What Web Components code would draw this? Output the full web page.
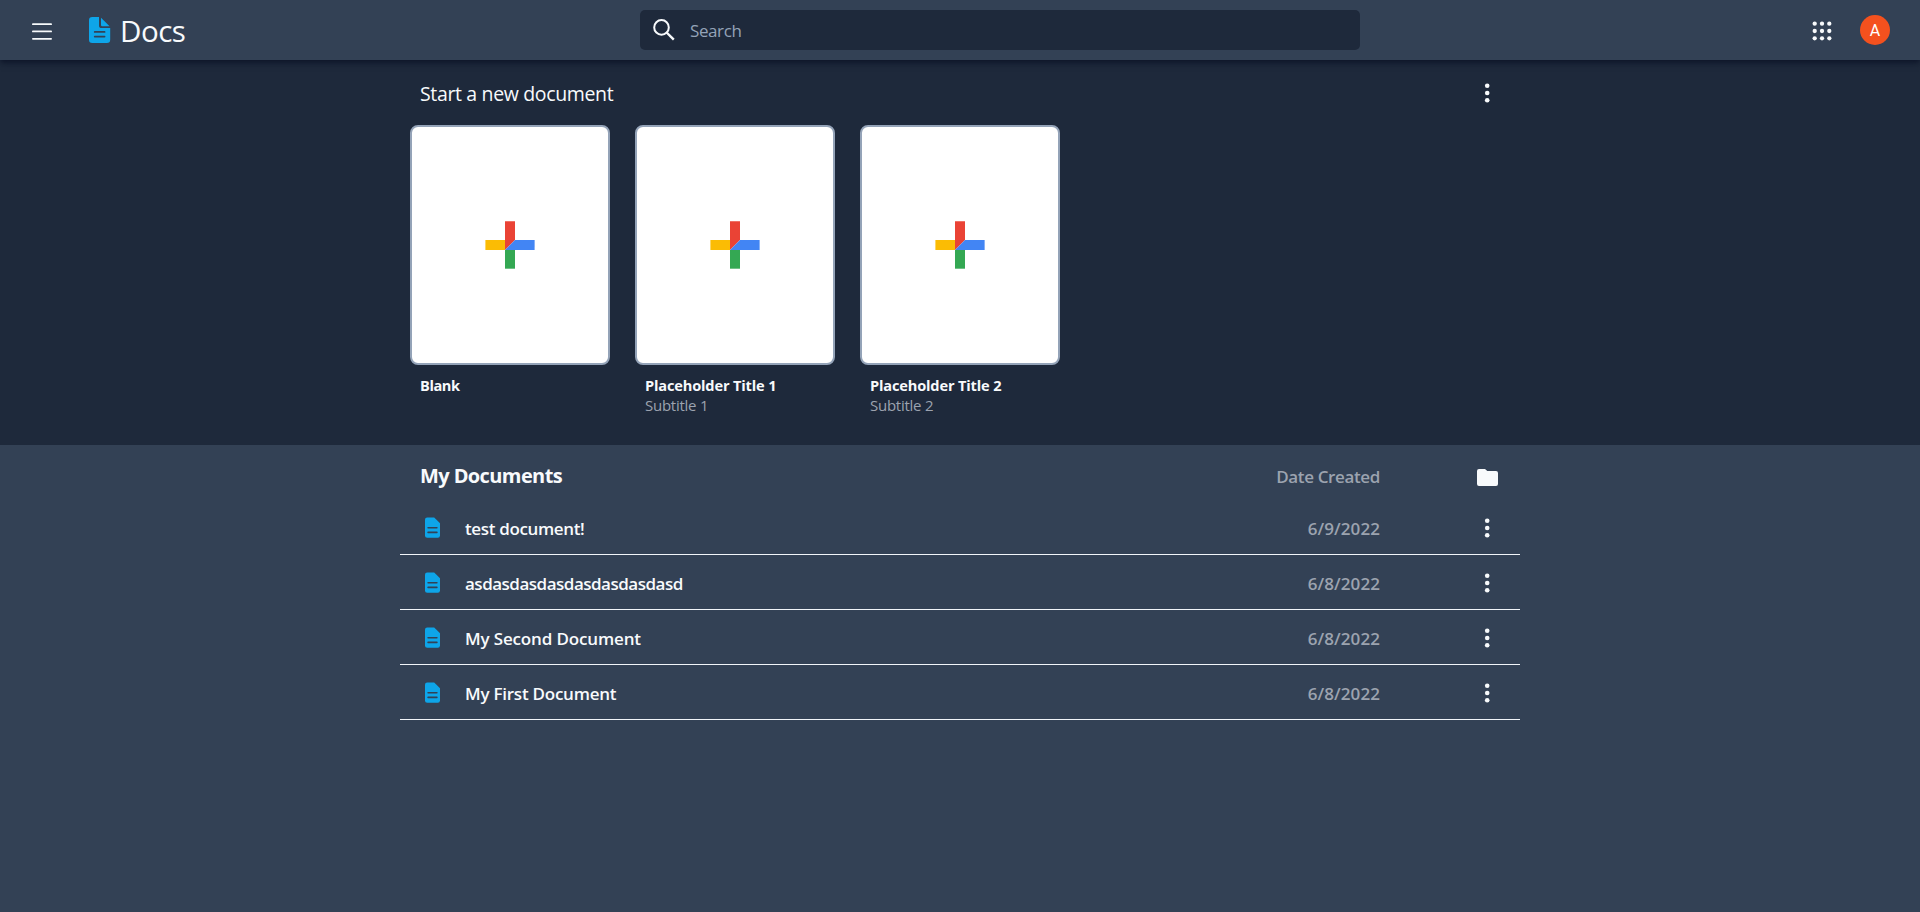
<!DOCTYPE html>
<html lang="en">
<head>
<meta charset="utf-8">
<title>Docs</title>
<style>
html,body{margin:0;height:100%;background:#334155}
body{font-family:"Open Sans","Noto Sans",sans-serif;color:#f8fafc;overflow:hidden}
</style>
</head>
<body>
<docs-app></docs-app>
<script>
function define(name, html, setup) {
  const template = document.createElement('template');
  template.innerHTML = html;
  customElements.define(name, class extends HTMLElement {
    connectedCallback() {
      if (this.shadowRoot) return;
      this.attachShadow({ mode: 'open' }).append(template.content.cloneNode(true));
      if (setup) setup(this, this.shadowRoot);
    }
  });
}

const icons = {
  menu: [20, 18, '<path d="M.9 2.2H19.1M.9 9.4H19.1M.9 16.8H19.1" stroke="#f8fafc" stroke-width="1.8" stroke-linecap="round"/>'],
  logo: [22, 26, '<path d="M3.3 0H10V8.4Q10 11 12.6 11H21.2V22.7Q21.2 26 17.9 26H3.3Q0 26 0 22.7V3.3Q0 0 3.3 0Z" fill="#0ea5e9"/><path d="M12 .8L20.6 9.3H13.2Q12 9.3 12 8.1Z" fill="#0ea5e9"/><path d="M5.7 14.9H15.6M5.7 19.6H15.6" stroke="#334155" stroke-width="1.7" stroke-linecap="round"/>'],
  file: [15, 21, '<path d="M2.2 .4H9.2L15 6.2V18.6Q15 20.8 12.8 20.8H2.2Q0 20.8 0 18.6V2.6Q0 .4 2.2 .4Z" fill="#0ea5e9"/><path d="M3.1 10.7H11.9M3.1 15.4H11.9" stroke="#334155" stroke-width="1.6" stroke-linecap="round"/>'],
  search: [22, 22, '<circle cx="8.5" cy="8.4" r="7.3" fill="none" stroke="#f8fafc" stroke-width="2"/><path d="M13.6 13.5L20.8 20.7" stroke="#f8fafc" stroke-width="2.4"/>'],
  apps: [20, 20, [2.7, 10, 17.3].map(y => [2.7, 10, 17.3].map(x => `<circle cx="${x}" cy="${y}" r="2.15" fill="#f8fafc"/>`).join('')).join('')],
  more: [6, 20, [2.8, 10, 17.2].map(y => `<circle cx="3.2" cy="${y}" r="2.3" fill="#f8fafc"/>`).join('')],
  folder: [21, 17, '<path d="M2 0H8L10.3 2.1H19Q21 2.1 21 4.1V15Q21 17 19 17H2Q0 17 0 15V2Q0 0 2 0Z" fill="#f8fafc"/>'],
  plus: [50, 48, '<path d="M20 .3H30V19L20 29Z" fill="#ea4335"/><path d="M.4 19H20V29H.4Z" fill="#fbbc04"/><path d="M20 29H30V47.7H20Z" fill="#34a853"/><path d="M30 19H49.6V29H20Z" fill="#4285f4"/>']
};

define('docs-icon', '<style>:host{display:block;flex:none}svg{display:block}</style>', (el, root) => {
  const [w, h, body] = icons[el.getAttribute('name')];
  root.innerHTML += `<svg width="${w}" height="${h}" viewBox="0 0 ${w} ${h}" fill="none">${body}</svg>`;
});

define('docs-avatar', `<style>
:host{display:grid;place-items:center;box-sizing:border-box;width:30px;height:30px;border-radius:50%;background:#f4511e;color:#fff;font:400 16px/30px Roboto,sans-serif}
slot{display:block;padding-top:1px}
</style><slot></slot>`);

define('docs-search', `<style>
:host{display:flex;align-items:center;box-sizing:border-box;width:720px;height:40px;padding:0 13px;gap:15px;border-radius:5px;background:#1e293b;color:#94a3b8;font-size:17px;line-height:24px;letter-spacing:-.4px}
span{padding-top:2px}
</style><docs-icon name="search"></docs-icon><span><slot></slot></span>`);

define('docs-header', `<style>
:host{display:grid;grid-template-columns:608px 720px 1fr;align-items:center;box-sizing:border-box;height:60px;padding:0 30px 0 32px;background:#334155;box-shadow:0 4px 6px -1px #0f172acc,0 2px 4px -1px #0f172a;position:relative;z-index:1}
.brand{display:flex;align-items:center}
.brand docs-icon[name=menu]{margin-right:37px;padding-top:1px}
.name{font-size:29.5px;line-height:40px;letter-spacing:-.5px;margin-left:9px;padding-top:1px}
.tools{display:flex;align-items:center;justify-content:flex-end;gap:28px}
.tools docs-icon{padding-top:1px}
</style>
<div class="brand"><docs-icon name="menu"></docs-icon><docs-icon name="logo"></docs-icon><span class="name">Docs</span></div>
<docs-search>Search</docs-search>
<div class="tools"><docs-icon name="apps"></docs-icon><docs-avatar>A</docs-avatar></div>`);

define('template-card', `<style>
:host{display:block;width:200px}
.page{display:grid;place-items:center;box-sizing:border-box;height:240px;border:2px solid #94a3b8;border-radius:8px;background:#fff}
.text{padding:10px 0 0 10px;line-height:20px;white-space:nowrap}
.title{font-weight:700;font-size:14.6px;letter-spacing:var(--title-tracking,-.16px)}
.sub{font-size:15px;color:#9ca3af;letter-spacing:-.25px}
</style>
<div class="page"><docs-icon name="plus"></docs-icon></div>
<div class="text"><div class="title"><slot></slot></div><div class="sub"><slot name="subtitle"></slot></div></div>`);

define('template-gallery', `<style>
:host{display:block;box-sizing:border-box;height:385px;background:#1e293b}
.inner{box-sizing:border-box;width:1120px;margin:0 auto;padding:0 10px}
.head{display:flex;align-items:center;justify-content:space-between;box-sizing:border-box;height:65px;padding:0 20px 0 10px;font-size:19.5px;letter-spacing:-.35px}
.head span{padding-top:2px}
.cards{display:flex;gap:25px}
</style>
<div class="inner"><div class="head"><span>Start a new document</span><docs-icon name="more"></docs-icon></div>
<div class="cards"><template-card style="--title-tracking:-.4px">Blank</template-card><template-card>Placeholder Title 1<span slot="subtitle">Subtitle 1</span></template-card><template-card>Placeholder Title 2<span slot="subtitle">Subtitle 2</span></template-card></div></div>`);

define('document-row', `<style>
:host{display:grid;grid-template-columns:40px 1fr auto 110px 10px;align-items:center;box-sizing:border-box;height:55px;padding:0 20px 0 25px;border-bottom:1px solid #f1f5f9;font-weight:600;font-size:17px;line-height:24px}
.name,.date{padding-top:4px}
.name{letter-spacing:var(--tracking,0)}
.date{color:#9ca3af;letter-spacing:.08px}
docs-icon[name=more]{grid-column:4;justify-self:end;padding-top:1px}
</style>
<docs-icon name="file"></docs-icon><span class="name"><slot></slot></span><span class="date"><slot name="date"></slot></span><docs-icon name="more"></docs-icon>`);

define('document-list', `<style>
:host{display:block;width:1120px;margin:0 auto}
.head{display:flex;align-items:center;box-sizing:border-box;height:55px;padding:6px 22px 0 20px;font-weight:600}
.title{flex:1;font-size:20px;font-weight:700;letter-spacing:-.6px}
.created{font-size:17px;color:#9ca3af;letter-spacing:-.36px;margin-right:97px;padding-top:1px}
docs-icon{margin-top:4px}
</style>
<div class="head"><span class="title">My Documents</span><span class="created">Date Created</span><docs-icon name="folder"></docs-icon></div>
<slot></slot>`);

define('docs-app', `<style>:host{display:block}</style>
<docs-header></docs-header>
<template-gallery></template-gallery>
<document-list>
<document-row style="--tracking:-.35px">test document!<span slot="date">6/9/2022</span></document-row>
<document-row style="--tracking:-.5px">asdasdasdasdasdasdasdasd<span slot="date">6/8/2022</span></document-row>
<document-row style="--tracking:-.15px">My Second Document<span slot="date">6/8/2022</span></document-row>
<document-row style="--tracking:-.24px">My First Document<span slot="date">6/8/2022</span></document-row>
</document-list>`);
</script>
</body>
</html>
